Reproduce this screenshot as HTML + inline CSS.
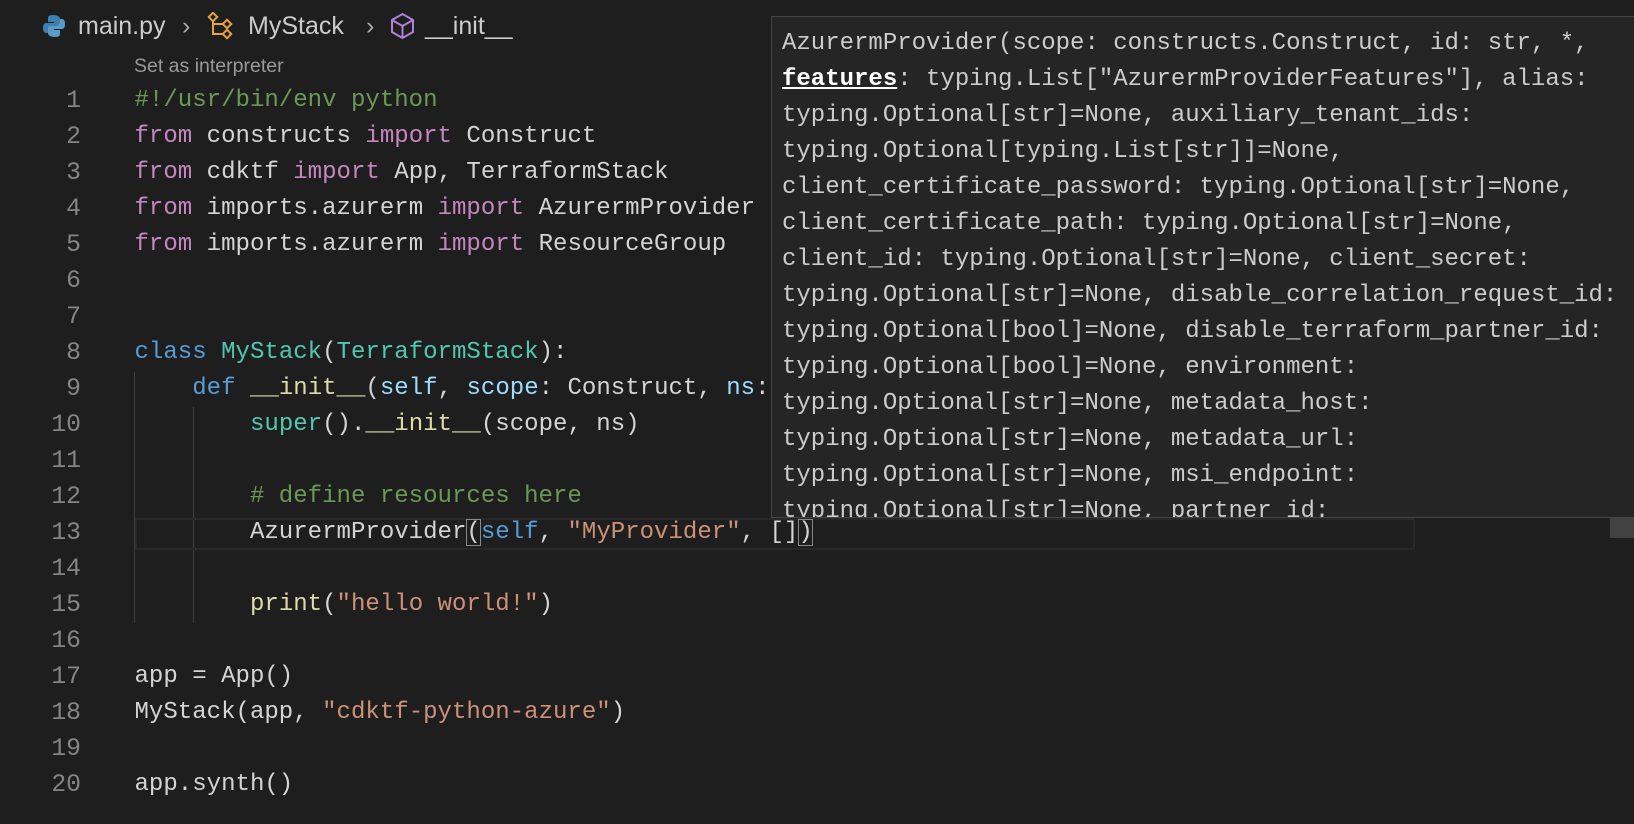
<!DOCTYPE html>
<html><head><meta charset="utf-8"><style>
body{margin:0;width:1634px;height:824px;background:#1e1e1e;overflow:hidden;position:relative;font-family:"Liberation Mono",monospace;}
.ln{position:absolute;left:0;width:81px;text-align:right;color:#858585;font-size:24.7px;line-height:36px;}
.cl{position:absolute;left:134.5px;color:#d4d4d4;font-size:24.05px;line-height:36px;white-space:pre;}
.k{color:#c586c0}.b{color:#569cd6}.t{color:#4ec9b0}.f{color:#dcdcaa}.p{color:#9cdcfe}.s{color:#ce9178}.c{color:#6a9955}
.bx{outline:1px solid #888;outline-offset:-1px}
.tip{position:absolute;left:771px;top:16px;width:870px;height:502px;background:#252526;border:1px solid #454545;box-sizing:border-box;overflow:hidden;}
.tip div{position:absolute;left:10px;color:#cccccc;font-size:24px;line-height:36px;white-space:pre;}
.crumb{position:absolute;top:9px;font-family:"Liberation Sans",sans-serif;font-size:25px;color:#cccccc;line-height:34px;}
</style></head><body>
<svg style="position:absolute;left:43px;top:14px" width="22" height="24" viewBox="0 0 22 24"><path d="M10 1c-5 0-5 2-5 4v3h6v1H3c-2 0-3 2-3 5s1 5 3 5h2v-3c0-2 2-4 4-4h5c2 0 3-1 3-3V5c0-2-2-4-7-4z" fill="#3f7fb0"/><path d="M12 23c5 0 5-2 5-4v-3h-6v-1h8c2 0 3-2 3-5s-1-5-3-5h-2v3c0 2-2 4-4 4H8c-2 0-3 1-3 3v4c0 2 2 4 7 4z" fill="#5a9bc8"/></svg>
<div class="crumb" style="left:78px">main.py</div>
<div class="crumb" style="left:182px;color:#aaa">›</div>
<svg style="position:absolute;left:207px;top:12px" width="28" height="28" viewBox="0 0 28 28" fill="none" stroke="#e8a33d" stroke-width="2"><rect x="3" y="2" width="6" height="6" transform="rotate(45 6 5)"/><rect x="17" y="9" width="6" height="6" transform="rotate(45 20 12)"/><rect x="17" y="19" width="6" height="6" transform="rotate(45 20 22)"/><path d="M6 9v13h10M6 12h10"/></svg>
<div class="crumb" style="left:248px">MyStack</div>
<div class="crumb" style="left:366px;color:#aaa">›</div>
<svg style="position:absolute;left:389px;top:12px" width="27" height="28" viewBox="0 0 27 28" fill="none" stroke="#b180d7" stroke-width="2"><path d="M13.5 2L24 8v12l-10.5 6L3 20V8z M3 8l10.5 6L24 8 M13.5 14v12"/></svg>
<div class="crumb" style="left:425px">__init__</div>
<div style="position:absolute;left:134px;top:55px;font-family:'Liberation Sans',sans-serif;font-size:19.5px;color:#999">Set as interpreter</div>
<div style="position:absolute;left:134px;top:372px;width:1px;height:251px;background:#404040"></div>
<div style="position:absolute;left:193px;top:407px;width:1px;height:216px;background:#404040"></div>
<div style="position:absolute;left:135px;top:518px;width:1280px;height:32px;border:2px solid #282828;box-sizing:border-box"></div>
<div style="position:absolute;left:1610px;top:518px;width:24px;height:20px;background:#424242"></div>
<div class="ln" style="top:83px">1</div><div class="cl c" style="top:83px">#!/usr/bin/env python</div>
<div class="ln" style="top:119px">2</div><div class="cl" style="top:119px"><span class="k">from</span> constructs <span class="k">import</span> Construct</div>
<div class="ln" style="top:155px">3</div><div class="cl" style="top:155px"><span class="k">from</span> cdktf <span class="k">import</span> App, TerraformStack</div>
<div class="ln" style="top:191px">4</div><div class="cl" style="top:191px"><span class="k">from</span> imports.azurerm <span class="k">import</span> AzurermProvider</div>
<div class="ln" style="top:227px">5</div><div class="cl" style="top:227px"><span class="k">from</span> imports.azurerm <span class="k">import</span> ResourceGroup</div>
<div class="ln" style="top:263px">6</div>
<div class="ln" style="top:299px">7</div>
<div class="ln" style="top:335px">8</div><div class="cl" style="top:335px"><span class="b">class</span> <span class="t">MyStack</span>(<span class="t">TerraformStack</span>):</div>
<div class="ln" style="top:371px">9</div><div class="cl" style="top:371px">    <span class="b">def</span> <span class="f">__init__</span>(<span class="p">self</span>, <span class="p">scope</span>: Construct, <span class="p">ns</span>:</div>
<div class="ln" style="top:407px">10</div><div class="cl" style="top:407px">        <span class="t">super</span>().<span class="f">__init__</span>(scope, ns)</div>
<div class="ln" style="top:443px">11</div>
<div class="ln" style="top:479px">12</div><div class="cl c" style="top:479px">        # define resources here</div>
<div class="ln" style="top:515px">13</div><div class="cl" style="top:515px">        AzurermProvider<span class="bx">(</span><span class="b">self</span>, <span class="s">"MyProvider"</span>, []<span class="bx">)</span></div>
<div class="ln" style="top:551px">14</div>
<div class="ln" style="top:587px">15</div><div class="cl" style="top:587px">        <span class="f">print</span>(<span class="s">"hello world!"</span>)</div>
<div class="ln" style="top:623px">16</div>
<div class="ln" style="top:659px">17</div><div class="cl" style="top:659px">app = App()</div>
<div class="ln" style="top:695px">18</div><div class="cl" style="top:695px">MyStack(app, <span class="s">"cdktf-python-azure"</span>)</div>
<div class="ln" style="top:731px">19</div>
<div class="ln" style="top:767px">20</div><div class="cl" style="top:767px">app.synth()</div>
<div class="tip">
<div style="top:9px">AzurermProvider(scope: constructs.Construct, id: str, *,</div>
<div style="top:45px"><b style="text-decoration:underline;color:#fff">features</b>: typing.List["AzurermProviderFeatures"], alias:</div>
<div style="top:81px">typing.Optional[str]=None, auxiliary_tenant_ids:</div>
<div style="top:117px">typing.Optional[typing.List[str]]=None,</div>
<div style="top:153px">client_certificate_password: typing.Optional[str]=None,</div>
<div style="top:189px">client_certificate_path: typing.Optional[str]=None,</div>
<div style="top:225px">client_id: typing.Optional[str]=None, client_secret:</div>
<div style="top:261px">typing.Optional[str]=None, disable_correlation_request_id:</div>
<div style="top:297px">typing.Optional[bool]=None, disable_terraform_partner_id:</div>
<div style="top:333px">typing.Optional[bool]=None, environment:</div>
<div style="top:369px">typing.Optional[str]=None, metadata_host:</div>
<div style="top:405px">typing.Optional[str]=None, metadata_url:</div>
<div style="top:441px">typing.Optional[str]=None, msi_endpoint:</div>
<div style="top:477px">typing.Optional[str]=None, partner_id:</div>
</div>
</body></html>
